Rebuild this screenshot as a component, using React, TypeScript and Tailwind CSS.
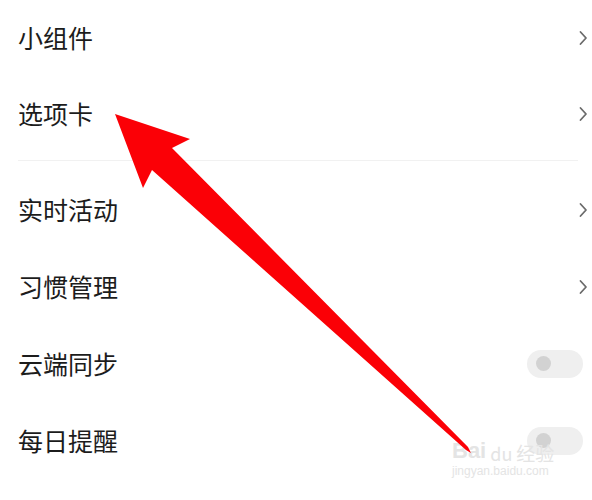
const ROWS_TOP = [
  { label: '小组件', h: 'h-[75px]' },
  { label: '选项卡', h: 'h-[77px]' },
]

const ROWS_BOTTOM: { label: string; kind: 'chevron' | 'toggle' }[] = [
  { label: '实时活动', kind: 'chevron' },
  { label: '习惯管理', kind: 'chevron' },
  { label: '云端同步', kind: 'toggle' },
  { label: '每日提醒', kind: 'toggle' },
]

function Chevron() {
  return (
    <svg width="10" height="16" viewBox="0 0 10 16" className="shrink-0">
      <path d="M2.5 2 L8 8 L2.5 14" fill="none" stroke="#6b6b6b" strokeWidth="1.8" strokeLinecap="round" strokeLinejoin="round" />
    </svg>
  )
}

function Toggle() {
  return (
    <div className="mr-[5px] flex h-[28px] w-[56px] items-center rounded-full bg-[#efefef] pl-[9px]">
      <div className="h-[15px] w-[15px] rounded-full bg-[#d2d2d2]" />
    </div>
  )
}

function Row({ label, h, right }: { label: string; h: string; right: React.ReactNode }) {
  return (
    <div className={`flex ${h} items-center justify-between pl-[18px] pr-[4px]`}>
      <span className="text-[25px] leading-none text-[#1c1c1c]">{label}</span>
      {right}
    </div>
  )
}

export default function App() {
  return (
    <div
      className="relative h-[500px] w-[592px] overflow-hidden bg-white"
      style={{ fontFamily: '"Noto Sans CJK SC", "Noto Sans", sans-serif' }}
    >
      {ROWS_TOP.map((r) => (
        <Row key={r.label} label={r.label} h={r.h} right={<Chevron />} />
      ))}

      <div className="mt-[8px] ml-[18px] mr-[14px] h-px bg-[#f1f1f1]" />

      <div className="mt-[10px]">
        {ROWS_BOTTOM.map((r) => (
          <Row
            key={r.label}
            label={r.label}
            h="h-[77px]"
            right={r.kind === 'chevron' ? <Chevron /> : <Toggle />}
          />
        ))}
      </div>

      {/* watermark */}
      <div className="pointer-events-none absolute left-[452px] top-[440px] flex flex-col items-start text-[#e4e4e4]">
        <div className="flex items-end gap-[4px]">
          <span className="text-[22px] font-bold leading-none" style={{ fontFamily: '"Liberation Sans", sans-serif' }}>Bai</span>
          <span className="text-[18px] leading-none">du</span>
          <span className="text-[19px] leading-none">经验</span>
        </div>
        <span className="mt-[3px] text-[12px] leading-none" style={{ fontFamily: '"Liberation Sans", sans-serif' }}>jingyan.baidu.com</span>
      </div>

      {/* annotation arrow */}
      <svg className="pointer-events-none absolute left-0 top-0" width="592" height="500" viewBox="0 0 592 500">
        <polygon
          points="115,114 190,139 172,148 468,447 471,453 466,450 152,170 143,188"
          fill="#fb0006"
        />
      </svg>
    </div>
  )
}
